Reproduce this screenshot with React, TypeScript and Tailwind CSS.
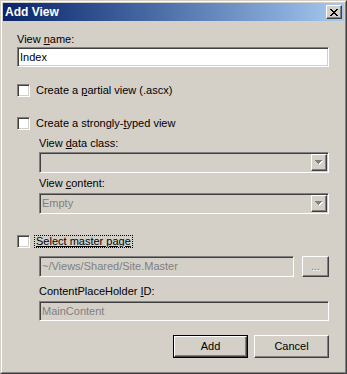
import { type ReactNode } from "react";

const raised =
  "border border-t-white border-l-white border-r-[#404040] border-b-[#404040] shadow-[inset_-1px_-1px_0_#808080,inset_1px_1px_0_#d4d0c8]";
const sunken =
  "border border-t-[#808080] border-l-[#808080] border-r-white border-b-white shadow-[inset_1px_1px_0_#404040,inset_-1px_-1px_0_#d4d0c8]";

function CloseGlyph() {
  const px = [
    "XX....XX",
    ".XX..XX.",
    "..XXXX..",
    "...XX...",
    "..XXXX..",
    ".XX..XX.",
    "XX....XX",
  ];
  return (
    <svg width="8" height="7" viewBox="0 0 8 7" shapeRendering="crispEdges">
      {px.flatMap((row, y) =>
        row.split("").map((c, x) =>
          c === "X" ? <rect key={`${x}-${y}`} x={x} y={y} width="1" height="1" fill="#000" /> : null,
        ),
      )}
    </svg>
  );
}

function Arrow() {
  return (
    <svg width="8" height="5" viewBox="0 0 8 5" shapeRendering="crispEdges">
      <path d="M1 1h7v1H1zM2 2h5v1H2zM3 3h3v1H3zM4 4h1v1H4z" fill="#fff" />
      <path d="M0 0h7v1H0zM1 1h5v1H1zM2 2h3v1H2zM3 3h1v1H3z" fill="#808080" />
    </svg>
  );
}

function Checkbox() {
  return <div className={`w-[13px] h-[13px] shrink-0 bg-white ${sunken}`} />;
}

function Combo({ value }: { value?: string }) {
  return (
    <div className={`h-[21px] flex items-stretch bg-[#d4d0c8] p-[1px] ${sunken}`}>
      <div className="flex-1 flex items-center pl-[1px] text-[#808080]">{value}</div>
      <div className={`w-[16px] flex items-center justify-center bg-[#d4d0c8] ${raised}`}>
        <Arrow />
      </div>
    </div>
  );
}

function Field({ value, disabled, className = "" }: { value: string; disabled?: boolean; className?: string }) {
  return (
    <div
      className={`flex items-center pl-[2px] ${sunken} ${
        disabled ? "bg-[#d4d0c8] text-[#808080]" : "bg-white text-black"
      } ${className}`}
    >
      {value}
    </div>
  );
}

function Label({ children, className = "" }: { children: ReactNode; className?: string }) {
  return <div className={`h-[13px] leading-[13px] ${className}`}>{children}</div>;
}

export default function App() {
  return (
    <div className="w-[347px] h-[374px] border border-t-[#d4d0c8] border-l-[#d4d0c8] border-r-[#404040] border-b-[#404040] font-['Liberation_Sans',Arial,sans-serif] text-[11px] text-black select-none">
      <div className="h-full flex flex-col border border-t-white border-l-white border-r-[#808080] border-b-[#808080] bg-[#d4d0c8] p-px">
        <div className="h-[18px] flex items-center justify-between pl-[2px] pr-[2px] bg-linear-to-r from-[#0a246a] to-[#a6caf0]">
          <span className="text-white font-bold text-[12px] leading-none">Add View</span>
          <div className={`w-[16px] h-[14px] flex items-center justify-center bg-[#d4d0c8] ${raised}`}>
            <CloseGlyph />
          </div>
        </div>

        <div className="flex flex-col pl-[14px] pr-[15px]">
          <Label className="mt-[12px]">
            View <u>n</u>ame:
          </Label>
          <Field value="Index" className="mt-[1px] h-[20px]" />

          <div className="mt-[17px] flex items-center gap-[6px]">
            <Checkbox />
            <span className="leading-[13px]">
              Create a <u>p</u>artial view (.ascx)
            </span>
          </div>

          <div className="mt-[20px] flex items-center gap-[6px]">
            <Checkbox />
            <span className="leading-[13px]">
              Create a strongly-<u>t</u>yped view
            </span>
          </div>

          <div className="pl-[22px] flex flex-col">
            <Label className="mt-[7px]">
              View <u>d</u>ata class:
            </Label>
            <div className="mt-[2px]">
              <Combo />
            </div>
            <Label className="mt-[4px]">
              View <u>c</u>ontent:
            </Label>
            <div className="mt-[3px]">
              <Combo value="Empty" />
            </div>
          </div>

          <div className="mt-[21px] flex items-center gap-[4px]">
            <Checkbox />
            <span className="leading-[11px] px-[1px] border border-dotted border-black underline">
              Select master page
            </span>
          </div>

          <div className="pl-[22px] flex flex-col">
            <div className="mt-[8px] flex gap-[8px]">
              <Field value="~/Views/Shared/Site.Master" disabled className="flex-1 h-[21px]" />
              <div className={`w-[27px] h-[21px] flex items-center justify-center bg-[#d4d0c8] ${raised}`}>
                <span className="text-[#808080] leading-none [text-shadow:1px_1px_0_#fff]">...</span>
              </div>
            </div>
            <Label className="mt-[8px]">
              ContentPlaceHolder <u>I</u>D:
            </Label>
            <Field value="MainContent" disabled className="mt-[3px] h-[20px]" />
          </div>

          <div className="mt-[14px] flex justify-end gap-[6px]">
            <div className="w-[75px] h-[23px] border border-black">
              <div className={`h-full flex items-center justify-center bg-[#d4d0c8] ${raised}`}>Add</div>
            </div>
            <div className={`w-[75px] h-[23px] flex items-center justify-center bg-[#d4d0c8] ${raised}`}>
              Cancel
            </div>
          </div>
        </div>
      </div>
    </div>
  );
}
